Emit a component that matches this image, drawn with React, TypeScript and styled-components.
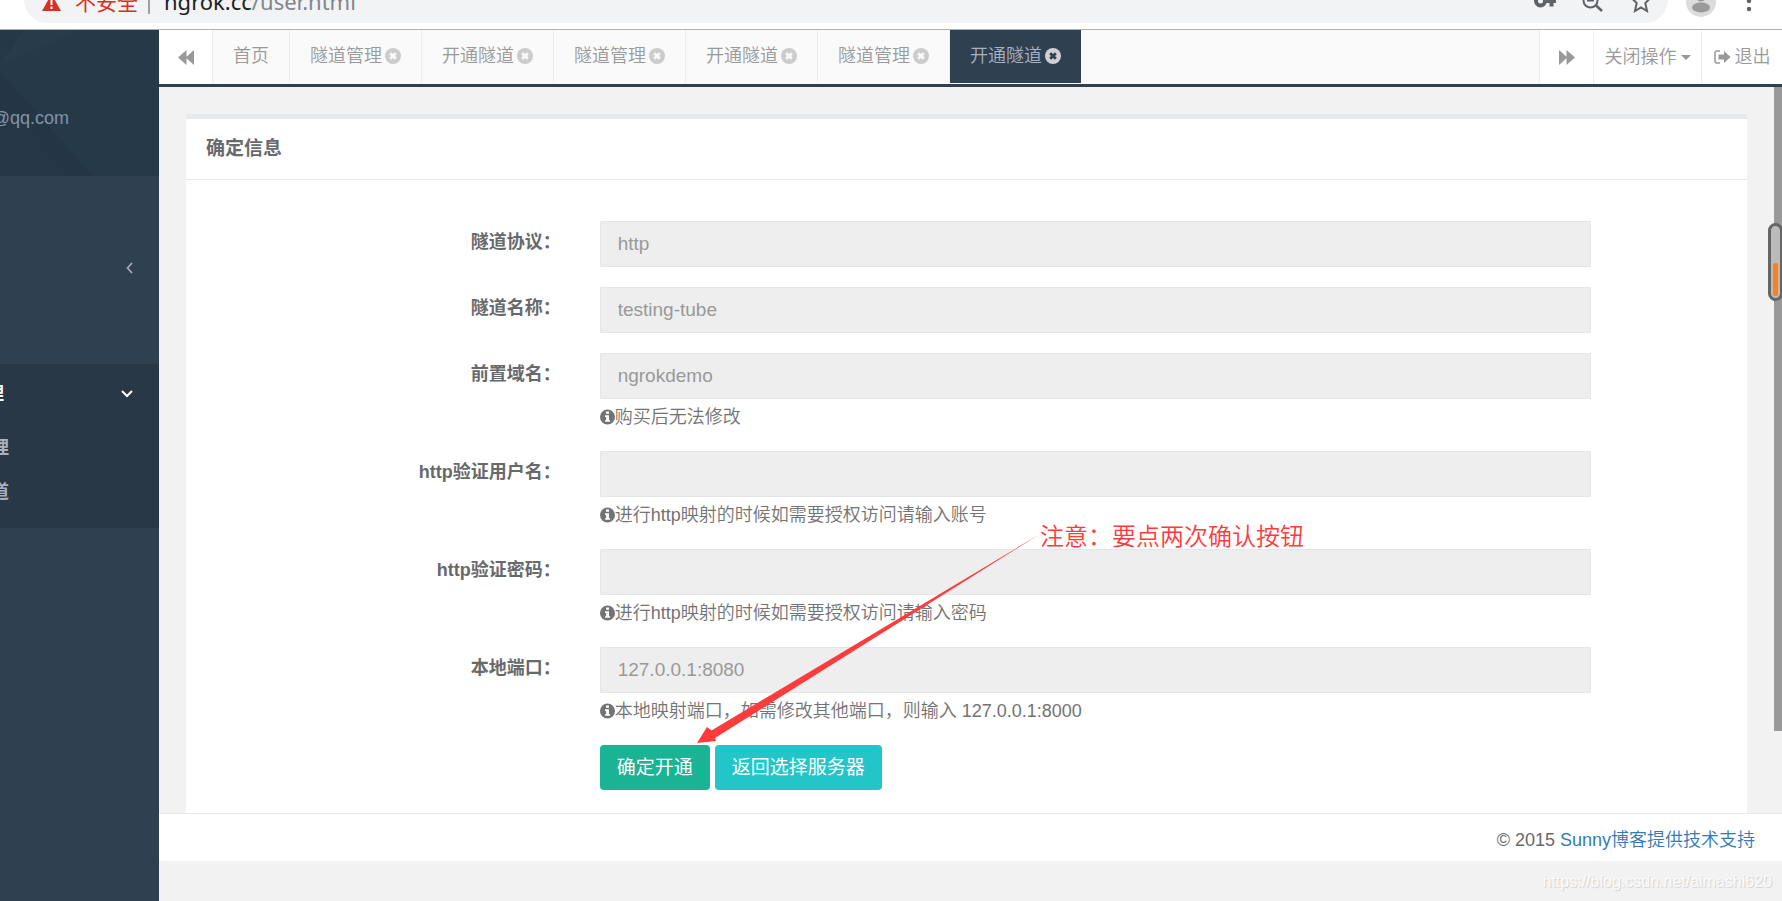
import React from 'react';
import styled, { createGlobalStyle, css } from 'styled-components';

const Global = createGlobalStyle`
  *, *::before, *::after { box-sizing: border-box; }
  html, body, #root { height: 100%; }
  body {
    margin: 0;
    overflow: hidden;
    background: #2f4050;
    color: #676a6c;
    font: 350 18px/26px "Liberation Sans", "Noto Sans CJK SC", sans-serif;
  }
  button, input { font: inherit; }
`;

const Page = styled.div`
  display: flex;
  flex-direction: column;
  min-height: 100vh;
  position: relative;
  overflow: hidden;
`;

/* Browser bar */
const BrowserBar = styled.header`
  display: flex;
  align-items: flex-start;
  height: 30px;
  padding-left: 24px;
  background: #fff;
  border-bottom: 1px solid #adb1ae;
  flex: none;
`;
const AddressBar = styled.div`
  display: flex;
  flex: 1;
  justify-content: space-between;
  height: 23px;
  padding: 0 14px 0 18px;
  background: #f1f3f4;
  border-radius: 0 0 23px 23px;
  overflow: hidden;
`;
const Location = styled.div`
  display: flex;
  align-items: flex-end;
  padding-bottom: 9px;
`;
const Warning = styled.span`
  padding-left: 14px;
  font: 400 21px/26px "Noto Sans CJK SC", sans-serif;
  color: #d93025;
`;
const Divider = styled.i`
  width: 2px;
  height: 26px;
  margin: 0 14px 0 10px;
  background: #9aa0a6;
`;
const Url = styled.span`
  font: 400 22px/26px "Noto Sans", sans-serif;
  color: #80868b;
  b { font-weight: 400; color: #202124; }
`;
const BarIcon = styled.svg`
  flex: none;
`;

const Body = styled.div`
  display: flex;
  flex: 1;
  min-height: 0;
`;

/* Sidebar */
const Sidebar = styled.nav`
  width: 159px;
  flex: none;
  background: #2f4050;
  color: #a7b1c2;
`;
const Profile = styled.div`
  display: grid;
  height: 146px;
  overflow: hidden;
  > * { grid-area: 1 / 1; }
`;
const Email = styled.span`
  display: flex;
  justify-content: flex-end;
  width: 69px;
  padding-top: 75px;
  color: #8095a8;
  font-weight: 400;
  z-index: 1;
`;
const MenuItem = styled.a<{ $active?: boolean }>`
  display: flex;
  align-items: center;
  justify-content: space-between;
  height: 60px;
  padding-right: 26px;
  color: ${p => (p.$active ? '#fff' : '#a7b1c2')};
  text-decoration: none;
  font-weight: 700;
`;
const MenuBlock = styled.div`
  display: flex;
  flex-direction: column;
  justify-content: center;
  height: 188px;
  padding-bottom: 4px;
`;
const ActiveBlock = styled.div`
  height: 164px;
  background: #293846;
`;
const SubMenu = styled.div`
  padding-top: 2px;
`;
const Cut = styled.span<{ $w: number }>`
  display: flex;
  justify-content: flex-end;
  width: ${p => p.$w}px;
  overflow: hidden;
  white-space: nowrap;
`;
const SubItem = styled(MenuItem)`
  height: 44px;
`;

/* Main */
const Main = styled.main`
  display: flex;
  flex-direction: column;
  flex: 1;
  min-width: 0;
  background: #f2f2f2;
`;
const TabBar = styled.div`
  display: flex;
  height: 57px;
  flex: none;
  background: #fff;
  border-bottom: 3px solid #2f4050;
  color: #999;
`;
const ToolButton = styled.button<{ $w: number; $side: 'left' | 'right' }>`
  display: flex;
  align-items: center;
  justify-content: center;
  gap: 4px;
  width: ${p => p.$w}px;
  padding: 0;
  border: 0 solid #eee;
  border-${p => p.$side}-width: 1px;
  background: #fff;
  color: #999;
  white-space: nowrap;
`;
const Tabs = styled.div`
  display: flex;
  flex: 1;
  min-width: 0;
  height: 53px;
  background: #fafafa;
  box-shadow: 0 1px #fafafa;
`;
const Tab = styled.div<{ $active?: boolean }>`
  display: flex;
  align-items: center;
  gap: 3px;
  padding: 0 20px 2px;
  border-right: 1px solid #eee;
  color: #999;
  white-space: nowrap;
  ${p => p.$active && css`
    border-right: 0;
    background: #2f4050;
    color: #a7b1c2;
  `}
`;
const TabClose = styled.button`
  display: flex;
  padding: 0;
  border: 0;
  background: none;
`;

const Content = styled.div`
  flex: 1;
  min-height: 0;
  padding: 27px 35px 0 27px;
  overflow: hidden;
`;
const Card = styled.section`
  min-height: 100%;
  background: #fff;
  border-top: 5px solid #e7eaec;
`;
const CardTitle = styled.h5`
  height: 61px;
  margin: 0;
  padding: 17px 20px;
  border-bottom: 1px solid #e7eaec;
  font-size: 19px;
  line-height: 26px;
  font-weight: 700;
`;
const Form = styled.form`
  display: flex;
  flex-direction: column;
  gap: 20px;
  padding-top: 41px;
`;
const Row = styled.div`
  display: grid;
  grid-template-columns: 26.5% 63.5%;
`;
const Label = styled.label`
  padding: 8px 39px 0 0;
  text-align: right;
  font-weight: 700;
`;
const Input = styled.input`
  display: block;
  width: 100%;
  height: 46px;
  padding: 0 17px;
  border: 1px solid #e5e6e7;
  border-radius: 1px;
  background: #eee;
  color: #999;
  font-size: 19px;
  font-weight: 400;
`;
const Hint = styled.span`
  display: flex;
  align-items: center;
  height: 25px;
  margin: 5px 0 2px;
  color: #737373;
  white-space: nowrap;
`;
const Buttons = styled.div`
  grid-column: 2;
  display: flex;
  gap: 5px;
`;
const Button = styled.button<{ $color: string }>`
  height: 45px;
  padding: 0 17px;
  border: 0;
  border-radius: 4px;
  background: ${p => p.$color};
  color: #fff;
  font-size: 19px;
  font-weight: 400;
`;
const Footer = styled.footer`
  height: 48px;
  flex: none;
  padding: 13px 27px 0;
  border-top: 1px solid #e7eaec;
  background: #fff;
  text-align: right;
  a { color: #337ab7; text-decoration: none; }
`;
const Watermark = styled.div`
  height: 40px;
  flex: none;
  padding: 8px 10px;
  text-align: right;
  font-size: 16px;
  color: #fbfbfb;
  text-shadow: 1px 1px 1px #d0d0d0;
`;

/* Things lying over the page */
const Thumb = styled.div`
  position: absolute;
  top: 87px;
  right: 0;
  width: 8px;
  height: 644px;
  background: #999;
`;
const Gauge = styled.svg`
  position: absolute;
  top: 223px;
  right: 0;
`;
const Arrow = styled.svg`
  position: absolute;
  top: 530px;
  left: 690px;
`;
const Note = styled.div`
  position: absolute;
  top: 519px;
  left: 1040px;
  color: #ff3b3b;
  font: 350 24px/32px "Noto Sans CJK SC", serif;
  white-space: nowrap;
`;

const CloseIcon = ({ active }: { active?: boolean }) => (
  <svg width="16" height="16" viewBox="0 0 16 16" aria-hidden="true">
    <circle cx="8" cy="8" r="8" fill={active ? '#d0d0d0' : '#ccc'} />
    <path d="M5.2 5.2l5.6 5.6M10.8 5.2l-5.6 5.6" stroke={active ? '#2f4050' : '#fafafa'} strokeWidth="2.8" />
  </svg>
);
const InfoIcon = () => (
  <svg width="15" height="16" viewBox="0 0 15 16" aria-hidden="true">
    <circle cx="7.5" cy="8" r="7.5" fill="#737373" />
    <path d="M6 2.6h3v2.2H6zM5 6.3h4v4.9h1.1v1.6H5v-1.6h1.1V7.9H5z" fill="#fff" />
  </svg>
);
const SkipIcon = ({ back }: { back?: boolean }) => (
  <svg width="16" height="15" viewBox="0 0 16 15" aria-hidden="true">
    <path
      d={back ? 'M16 0V15L8.500 8.300V15L0 7.500L8.500 0V6.700z' : 'M0 0V15L7.500 8.300V15L16 7.500L7.500 0V6.700z'}
      fill="#999"
    />
  </svg>
);

const tabs = ['隧道管理', '开通隧道', '隧道管理', '开通隧道', '隧道管理', '开通隧道'];
const fields = [
  { id: 'protocol', label: '隧道协议：', value: 'http' },
  { id: 'name', label: '隧道名称：', value: 'testing-tube' },
  { id: 'domain', label: '前置域名：', value: 'ngrokdemo', hint: '购买后无法修改' },
  { id: 'user', label: 'http验证用户名：', value: '', hint: '进行http映射的时候如需要授权访问请输入账号' },
  { id: 'password', label: 'http验证密码：', value: '', hint: '进行http映射的时候如需要授权访问请输入密码' },
  { id: 'port', label: '本地端口：', value: '127.0.0.1:8080', hint: '本地映射端口，如需修改其他端口，则输入 127.0.0.1:8000' },
];

export default function App() {
  return (
    <Page>
      <Global />
      <BrowserBar>
        <AddressBar>
          <Location>
            <BarIcon width="19" height="20" viewBox="0 0 19 20" aria-hidden="true">
              <path d="M9.500 0L19 17H0z" fill="#d93025" />
              <path d="M9.500 6v5M9.500 12.500v2.500" stroke="#fff" strokeWidth="2" />
            </BarIcon>
            <Warning>不安全</Warning>
            <Divider />
            <Url><b>ngrok.cc</b>/user.html</Url>
          </Location>
          <BarIcon width="122" height="23" viewBox="1532 0 122 23" fill="none" stroke="#5f6368" aria-hidden="true">
            <circle cx="1540.500" cy="1" r="4.500" strokeWidth="4" />
            <path d="M1544 1H1556M1551.500 0V6.500" strokeWidth="4" />
            <circle cx="1590.500" cy="0.500" r="7" strokeWidth="2" />
            <path d="M1587 0.500H1594" strokeWidth="2" />
            <path d="M1595.500 5L1602 11" strokeWidth="2.500" />
            <path d="M1641 -8L1643.700 -2L1650 -1.500L1645.300 3L1647 11L1641 7.300L1635 11L1636.700 3L1632 -1.500L1638.300 -2z" strokeWidth="2" />
          </BarIcon>
        </AddressBar>
        <BarIcon width="114" height="23" viewBox="1668 0 114 23" aria-hidden="true">
          <circle cx="1701" cy="2" r="15" fill="#dcdcdc" />
          <ellipse cx="1701" cy="7.500" rx="9" ry="5" fill="#9a9a9a" />
          <circle cx="1701" cy="-3" r="4.500" fill="#9a9a9a" />
          <circle cx="1749" cy="1" r="2.200" fill="#5f6368" />
          <circle cx="1749" cy="9" r="2.200" fill="#5f6368" />
        </BarIcon>
      </BrowserBar>
      <Body>
        <Sidebar>
          <Profile>
            <svg width="159" height="146" aria-hidden="true">
              <rect width="159" height="146" fill="#263949" />
              <path d="M0 35L23 0H0z" fill="#253847" />
              <path d="M0 35L23 0H80z" fill="#283b4b" />
              <path d="M0 42L93 146H72L0 62z" fill="#243545" />
              <path d="M0 62L72 146H0z" fill="#253746" />
            </svg>
            <Email>@qq.com</Email>
          </Profile>
          <MenuBlock>
            <MenuItem href="#" aria-label="展开">
              <span />
              <svg width="7" height="12" viewBox="0 0 7 12"><path d="M6 1L1.500 6L6 11" fill="none" stroke="#a7b1c2" strokeWidth="1.600" /></svg>
            </MenuItem>
          </MenuBlock>
          <ActiveBlock>
            <MenuItem href="#" $active>
              <Cut $w={4}>理</Cut>
              <svg width="12" height="8" viewBox="0 0 12 8"><path d="M1 1L6 6L11 1" fill="none" stroke="#fff" strokeWidth="2" /></svg>
            </MenuItem>
            <SubMenu>
              <SubItem href="#"><Cut $w={9}>理</Cut></SubItem>
              <SubItem href="#"><Cut $w={9}>道</Cut></SubItem>
            </SubMenu>
          </ActiveBlock>
        </Sidebar>
        <Main>
          <TabBar>
            <ToolButton $w={54} $side="right" aria-label="向左"><SkipIcon back /></ToolButton>
            <Tabs>
              <Tab>首页</Tab>
              {tabs.map((t, i) => (
                <Tab key={i} $active={i === 5}>
                  {t}
                  <TabClose aria-label="关闭"><CloseIcon active={i === 5} /></TabClose>
                </Tab>
              ))}
            </Tabs>
            <ToolButton $w={54} $side="left" aria-label="向右"><SkipIcon /></ToolButton>
            <ToolButton $w={108} $side="left">
              关闭操作
              <svg width="10" height="5" viewBox="0 0 10 5"><path d="M0 0h10L5 5z" fill="#999" /></svg>
            </ToolButton>
            <ToolButton $w={81} $side="left">
              <svg width="17" height="14" viewBox="0 0 17 14">
                <path d="M6 1H3Q1 1 1 3V11Q1 13 3 13H6" fill="none" stroke="#999" strokeWidth="1.500" />
                <path d="M4.500 4.500H10V1L16.500 7L10 13V9.500H4.500z" fill="#999" />
              </svg>
              退出
            </ToolButton>
          </TabBar>
          <Content>
            <Card>
              <CardTitle>确定信息</CardTitle>
              <Form>
                {fields.map(f => (
                  <Row key={f.id}>
                    <Label htmlFor={f.id}>{f.label}</Label>
                    <div>
                      <Input id={f.id} defaultValue={f.value} readOnly />
                      {f.hint && <Hint><InfoIcon />{f.hint}</Hint>}
                    </div>
                  </Row>
                ))}
                <Row>
                  <Buttons>
                    <Button type="button" $color="#1ab394">确定开通</Button>
                    <Button type="button" $color="#23c6c8">返回选择服务器</Button>
                  </Buttons>
                </Row>
              </Form>
            </Card>
          </Content>
          <Footer>© 2015 <a href="#">Sunny博客提供技术支持</a></Footer>
          <Watermark>https://blog.csdn.net/aimashi620</Watermark>
        </Main>
      </Body>
      <Thumb />
      <Gauge width="14" height="78" viewBox="0 0 14 78" aria-hidden="true">
        <rect x="1.500" y="1.500" width="12" height="75" rx="6" fill="#bbb" stroke="#666" strokeWidth="3" />
        <rect x="5" y="40" width="5" height="33" rx="2" fill="#ff7f1a" />
      </Gauge>
      <Arrow width="360" height="220" viewBox="690 530 360 220" aria-hidden="true">
        <path d="M697 743L707 727L711.500 730.500L1040 534L715 738L716 741z" fill="#ff3b3b" />
      </Arrow>
      <Note>注意：要点两次确认按钮</Note>
    </Page>
  );
}
